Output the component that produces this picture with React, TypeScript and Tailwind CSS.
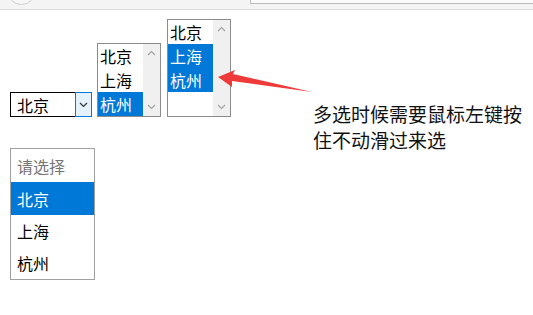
import React from 'react';

const font = { fontFamily: '"Noto Sans CJK SC", "Microsoft YaHei", sans-serif' };

const ChevronUp = () => (
  <svg width="9" height="6" viewBox="0 0 9 6" fill="none">
    <path d="M1 5 L4.5 1.5 L8 5" stroke="#a3a3a3" strokeWidth="1.2" />
  </svg>
);

const ChevronDown = ({ color = '#a3a3a3' }: { color?: string }) => (
  <svg width="9" height="6" viewBox="0 0 9 6" fill="none">
    <path d="M1 1 L4.5 4.5 L8 1" stroke={color} strokeWidth="1.2" />
  </svg>
);

interface ListProps {
  options: string[];
  selected: string[];
  rows: number;
}

// multiple select box with its scroll track
const MultiList = ({ options, selected, rows }: ListProps) => {
  const empty = rows - options.length;
  return (
    <div className="flex w-[64px] border border-[#8c8c8c] bg-white">
      <div className="flex w-[45px] flex-col">
        {options.map((o) => (
          <div
            key={o}
            className={`flex h-[24px] items-center pl-[2px] text-[16px] leading-none ${
              selected.includes(o) ? 'bg-[#0078d7] text-white' : 'text-black'
            }`}
          >
            {o}
          </div>
        ))}
        {Array.from({ length: empty }).map((_, i) => (
          <div key={i} className="h-[24px]" />
        ))}
      </div>
      <div className="flex w-[17px] flex-col items-center justify-between bg-[#f0f0f0] py-[6px]">
        <ChevronUp />
        <ChevronDown />
      </div>
    </div>
  );
};

export default function App() {
  return (
    <div className="relative h-[315px] w-[533px] overflow-hidden bg-white" style={font}>
      {/* browser chrome remains at the top */}
      <div className="relative h-[10px] overflow-hidden border-b border-[#dcdcdc] bg-[#f4f4f4]">
        <div className="absolute left-[7px] top-[-24px] h-[29px] w-[29px] rounded-full border border-[#cfcfcf] bg-[#f7f7f7]" />
        <div className="absolute left-[250px] top-[-10px] h-[14px] w-[300px] border border-[#bdbdbd] bg-[#fafafa]" />
      </div>

      <div className="px-[10px] pt-[9px]">
        <div className="flex items-end">
          <div className="flex h-[25px] w-[82px] border border-black bg-white">
            <div className="flex flex-1 items-center pl-[6px] text-[16px] leading-none text-black">北京</div>
            <div className="-my-px -mr-px flex w-[17px] items-center justify-center border border-[#0078d7] bg-[#e5f1fb]">
              <ChevronDown color="#333" />
            </div>
          </div>
          <div className="ml-[5px]">
            <MultiList options={['北京', '上海', '杭州']} selected={['杭州']} rows={3} />
          </div>
          <div className="ml-[6px]">
            <MultiList options={['北京', '上海', '杭州']} selected={['上海', '杭州']} rows={4} />
          </div>
        </div>

        <div className="mt-[31px] flex w-[85px] flex-col border border-[#a0a0a0] bg-white py-px text-[16px] leading-none">
          <div className="flex h-[32px] items-center pl-[6px] text-[#757575]">请选择</div>
          <div className="flex h-[33px] items-center bg-[#0078d7] pl-[6px] text-white">北京</div>
          <div className="flex h-[32px] items-center pl-[6px] text-black">上海</div>
          <div className="flex h-[31px] items-center pl-[6px] text-black">杭州</div>
        </div>
      </div>

      {/* annotation arrow and note */}
      <svg className="absolute left-0 top-0" width="533" height="315" viewBox="0 0 533 315">
        <polygon points="218,77 235,70 233,74 312,92 232,81 232,87" fill="#ef3a3a" />
      </svg>
      <div className="absolute left-[313px] top-[101px] w-[215px] text-[19px] leading-[26px] text-[#111]">
        多选时候需要鼠标左键按
        <br />
        住不动滑过来选
      </div>
    </div>
  );
}
